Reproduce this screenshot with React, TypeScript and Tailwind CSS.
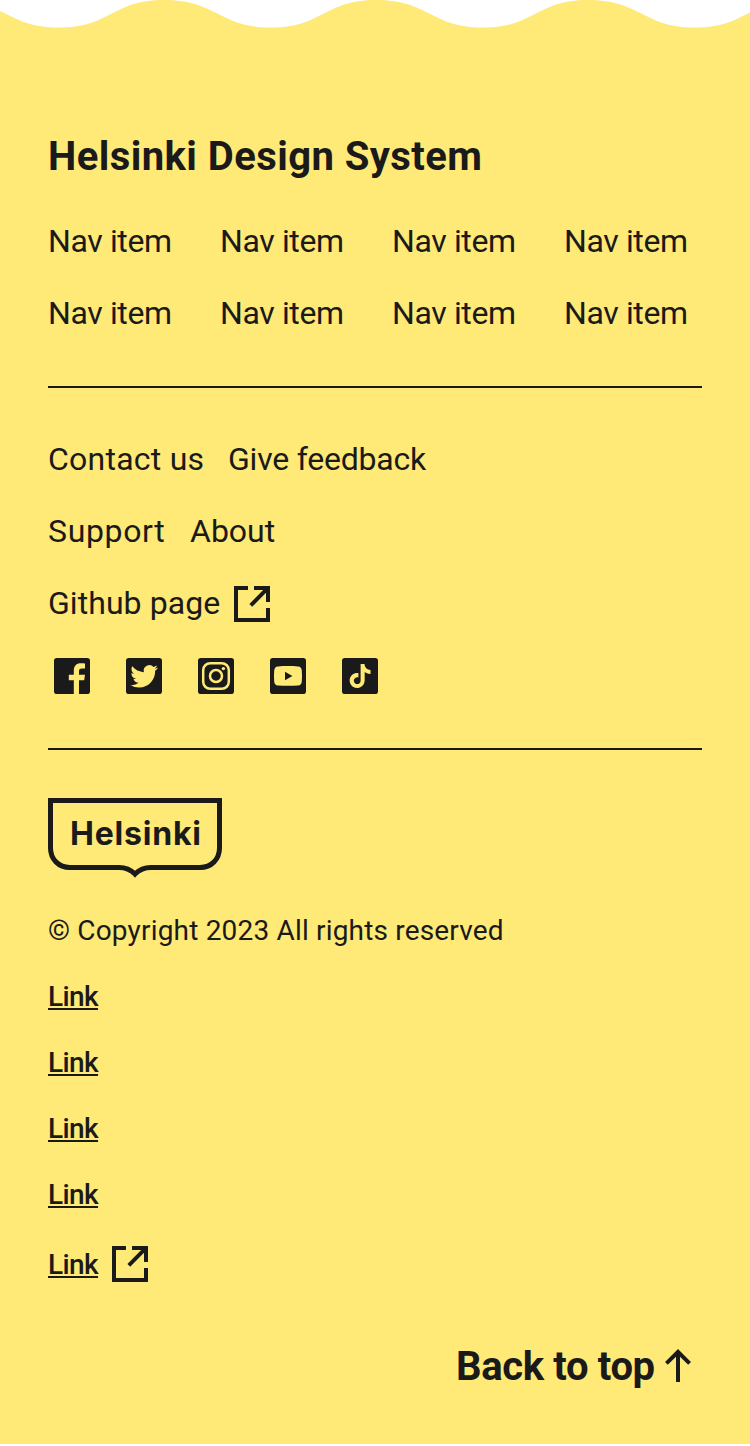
import type { ReactNode } from "react";

const NAV_ITEMS = Array.from({ length: 8 }, (_, i) => i);
const LINKS = Array.from({ length: 4 }, (_, i) => i);

function Wave() {
  return (
    <svg className="block h-8 w-full" viewBox="0 0 750 32" aria-hidden="true">
      <defs>
        <pattern id="wave" x="-48" y="0" width="212" height="40" patternUnits="userSpaceOnUse">
          <path
            transform="scale(10.6)"
            fill="#ffe977"
            d="M0 4h20V0c-4.9 0-5 2.6-9.9 2.6S5 0 0 0z"
          />
        </pattern>
      </defs>
      <rect width="750" height="32" fill="url(#wave)" />
    </svg>
  );
}

function ExternalIcon() {
  return (
    <svg className="size-12 shrink-0" viewBox="0 0 24 24" fill="currentColor" aria-hidden="true">
      <path d="M10 3v2H5v14h14v-5h2v7H3V3h7zm11 0v8h-2V6.400l-6.900 7-1.400-1.400L17.600 5H13V3h8z" />
    </svg>
  );
}

function SocialIcon({ label, children }: { label: string; children: ReactNode }) {
  return (
    <a href="#" aria-label={label}>
      <svg className="block size-12" viewBox="0 0 24 24">
        <rect x="3" y="3" width="18" height="18" rx="1.4" fill="#1a1a1a" />
        {children}
      </svg>
    </a>
  );
}

function Logo() {
  return (
    <svg className="block h-20 w-[174px]" viewBox="0 0 174 80" role="img">
      <path
        d="M2.5 2.5h169v47.500c0 11-8 19.500-19.500 19.500h-49c-7 0-12 2.500-16 6.600-4-4.100-9-6.600-16-6.600h-49c-11.500 0-19.500-8.500-19.500-19.500z"
        fill="none"
        stroke="#1a1a1a"
        strokeWidth="5"
      />
      <text
        x="22"
        y="47"
        textLength="131"
        className="fill-[#1a1a1a] font-['Inter',sans-serif] text-[32px] font-bold"
      >
        Helsinki
      </text>
    </svg>
  );
}

const linkText =
  "text-[28px] leading-[42px] font-medium tracking-[-0.6px] underline decoration-2 underline-offset-[2px] [text-decoration-skip-ink:none]";

export default function App() {
  return (
    <footer className="flex h-[1444px] w-[750px] flex-col bg-white font-['Roboto',sans-serif] text-[#1a1a1a]">
      <Wave />
      <div className="flex grow flex-col bg-[#ffe977] px-12 pt-[101px]">
        <h2 className="text-[40px] leading-[48px] font-bold tracking-[0.43px]">
          Helsinki Design System
        </h2>

        <nav className="mt-9 grid grid-cols-[repeat(4,124px)] gap-x-12 gap-y-6 text-[32px] leading-[48px] tracking-[-0.38px] whitespace-nowrap">
          {NAV_ITEMS.map((i) => (
            <a key={i} href="#">
              Nav item
            </a>
          ))}
        </nav>

        <hr className="mt-[49px] border-t-2 border-[#1a1a1a]" />

        <div className="mt-[47px] flex flex-col gap-6 text-[32px] leading-[48px]">
          <div className="flex gap-6">
            <a href="#" className="w-[156px] tracking-[0.24px] whitespace-nowrap">
              Contact us
            </a>
            <a href="#" className="tracking-[-0.22px]">
              Give feedback
            </a>
          </div>
          <div className="flex gap-6">
            <a href="#" className="w-[118px] tracking-[0.65px]">
              Support
            </a>
            <a href="#">About</a>
          </div>
          <a href="#" className="flex h-12 items-start">
            <span className="w-[180px] tracking-[0.06px]">Github page</span>
            <span className="pt-px">
              <ExternalIcon />
            </span>
          </a>
        </div>

        <div className="mt-[25px] flex gap-6">
          <SocialIcon label="Facebook">
            <path
              fill="#ffe977"
              d="M15.500 21v-6.900h2.600l.4-2.700h-3V9.600c0-.9.3-1.400 1.500-1.400h1.500V5.700c-.3 0-1.200-.1-2.100-.1-2.200 0-3.500 1.300-3.500 3.700v2.100h-2.500v2.700h2.500V21z"
            />
          </SocialIcon>
          <SocialIcon label="Twitter">
            <path
              transform="translate(5.170 5.300) scale(0.575)"
              fill="#ffe977"
              d="M23.953 4.570a10 10 0 01-2.825.775 4.958 4.958 0 002.163-2.723c-.951.555-2.005.959-3.127 1.184a4.920 4.920 0 00-8.384 4.482C7.690 8.095 4.067 6.130 1.640 3.162a4.822 4.822 0 00-.666 2.475c0 1.710.870 3.213 2.188 4.096a4.904 4.904 0 01-2.228-.616v.060a4.923 4.923 0 003.946 4.827 4.996 4.996 0 01-2.212.085 4.936 4.936 0 004.604 3.417 9.867 9.867 0 01-6.102 2.105c-.390 0-.779-.023-1.170-.067a13.995 13.995 0 007.557 2.209c9.053 0 13.998-7.496 13.998-13.985 0-.210 0-.420-.015-.630A9.935 9.935 0 0024 4.590z"
            />
          </SocialIcon>
          <SocialIcon label="Instagram">
            <g fill="none" stroke="#ffe977" strokeWidth="1.250">
              <rect x="5.600" y="5.600" width="12.800" height="12.800" rx="3.500" />
              <circle cx="12" cy="12" r="3" />
            </g>
            <circle cx="15.700" cy="8.300" r="0.850" fill="#ffe977" />
          </SocialIcon>
          <SocialIcon label="YouTube">
            <path
              fill="#ffe977"
              fillRule="evenodd"
              d="M7 7.200c3-.3 7-.3 10 0 1.300.1 1.800.8 1.900 2 .15 1.900.15 3.700 0 5.500-.1 1.200-.6 1.900-1.900 2-3 .2-7 .2-10 0-1.300-.1-1.800-.8-1.900-2-.15-1.800-.15-3.600 0-5.500.1-1.200.6-1.900 1.900-2zM10.500 9.900v4.200l3.700-2.100z"
            />
          </SocialIcon>
          <SocialIcon label="TikTok">
            <path
              transform="translate(6.050 6) scale(0.5)"
              fill="#ffe977"
              d="M12.525.020c1.310-.020 2.610-.010 3.910-.020.080 1.530.630 3.090 1.750 4.170 1.120 1.110 2.700 1.620 4.240 1.790v4.030c-1.440-.050-2.890-.350-4.200-.970-.570-.260-1.100-.590-1.620-.930-.010 2.920.010 5.840-.020 8.750-.080 1.400-.540 2.790-1.350 3.940-1.310 1.920-3.580 3.170-5.910 3.210-1.430.080-2.860-.310-4.080-1.030-2.020-1.190-3.440-3.370-3.650-5.710-.020-.5-.030-1-.010-1.490.180-1.900 1.120-3.720 2.580-4.960 1.660-1.440 3.980-2.130 6.150-1.720.020 1.480-.040 2.960-.040 4.440-.990-.320-2.150-.230-3.020.370-.630.410-1.110 1.040-1.360 1.750-.210.510-.150 1.070-.140 1.610.240 1.640 1.820 3.020 3.500 2.870 1.120-.010 2.190-.660 2.770-1.610.190-.330.400-.670.410-1.060.100-1.790.060-3.570.070-5.360.010-4.030-.010-8.050.020-12.070z"
            />
          </SocialIcon>
        </div>

        <hr className="mt-12 border-t-2 border-[#1a1a1a]" />

        <div className="mt-12">
          <Logo />
        </div>

        <p className="mt-8 text-[28px] leading-[42px] tracking-[0.18px]">
          © Copyright 2023 All rights reserved
        </p>

        <div className="mt-6 flex flex-col items-start gap-6">
          {LINKS.map((i) => (
            <a key={i} href="#" className={linkText}>
              Link
            </a>
          ))}
          <a href="#" className="flex h-12 items-start gap-2">
            <span className="pt-1">
              <span className={linkText}>Link</span>
            </span>
            <ExternalIcon />
          </a>
        </div>

        <a href="#" className="mt-[54px] flex h-12 items-start self-end">
          <span className="w-[198px] pt-px text-[40px] leading-[48px] font-bold tracking-[-0.36px] whitespace-nowrap">
            Back to top
          </span>
          <svg className="size-12" viewBox="0 0 24 24" fill="currentColor" aria-hidden="true">
            <path d="M12 3.500l6.500 6.500-1.400 1.400L13 7.400V20h-2V7.400l-4.100 4L5.500 10z" />
          </svg>
        </a>
      </div>
    </footer>
  );
}
